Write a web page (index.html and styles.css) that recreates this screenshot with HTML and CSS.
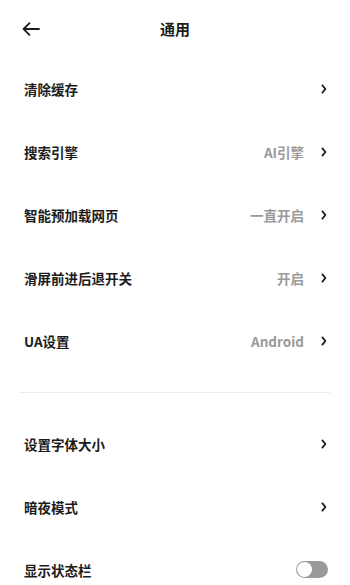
FILE: index.html
```html
<!DOCTYPE html>
<html lang="zh">
<head>
<meta charset="utf-8">
<link rel="stylesheet" href="styles.css">
</head>
<body>
<div class="page">
  <header class="header">
    <svg class="back" width="18" height="14" viewBox="0 0 18 14"><path d="M17 7H2M7.5 1.2L1.6 7l5.9 5.8" fill="none" stroke="#1c1c1c" stroke-width="1.8" stroke-linecap="round" stroke-linejoin="round"/></svg>
    <h1 class="title">通用</h1>
  </header>
  <div class="group">
    <div class="row"><span class="label">清除缓存</span><span class="right"><svg class="chev" width="6" height="10" viewBox="0 0 6 10"><path d="M1.4 1.4L4.4 5 1.4 8.6" fill="none" stroke="#1c1c1c" stroke-width="1.8" stroke-linecap="round" stroke-linejoin="round"/></svg></span></div>
    <div class="row"><span class="label">搜索引擎</span><span class="right"><span class="value">AI引擎</span><svg class="chev" width="6" height="10" viewBox="0 0 6 10"><path d="M1.4 1.4L4.4 5 1.4 8.6" fill="none" stroke="#1c1c1c" stroke-width="1.8" stroke-linecap="round" stroke-linejoin="round"/></svg></span></div>
    <div class="row"><span class="label">智能预加载网页</span><span class="right"><span class="value">一直开启</span><svg class="chev" width="6" height="10" viewBox="0 0 6 10"><path d="M1.4 1.4L4.4 5 1.4 8.6" fill="none" stroke="#1c1c1c" stroke-width="1.8" stroke-linecap="round" stroke-linejoin="round"/></svg></span></div>
    <div class="row"><span class="label">滑屏前进后退开关</span><span class="right"><span class="value">开启</span><svg class="chev" width="6" height="10" viewBox="0 0 6 10"><path d="M1.4 1.4L4.4 5 1.4 8.6" fill="none" stroke="#1c1c1c" stroke-width="1.8" stroke-linecap="round" stroke-linejoin="round"/></svg></span></div>
    <div class="row"><span class="label">UA设置</span><span class="right"><span class="value">Android</span><svg class="chev" width="6" height="10" viewBox="0 0 6 10"><path d="M1.4 1.4L4.4 5 1.4 8.6" fill="none" stroke="#1c1c1c" stroke-width="1.8" stroke-linecap="round" stroke-linejoin="round"/></svg></span></div>
  </div>
  <div class="divider"></div>
  <div class="group">
    <div class="row"><span class="label">设置字体大小</span><span class="right"><svg class="chev" width="6" height="10" viewBox="0 0 6 10"><path d="M1.4 1.4L4.4 5 1.4 8.6" fill="none" stroke="#1c1c1c" stroke-width="1.8" stroke-linecap="round" stroke-linejoin="round"/></svg></span></div>
    <div class="row"><span class="label">暗夜模式</span><span class="right"><svg class="chev" width="6" height="10" viewBox="0 0 6 10"><path d="M1.4 1.4L4.4 5 1.4 8.6" fill="none" stroke="#1c1c1c" stroke-width="1.8" stroke-linecap="round" stroke-linejoin="round"/></svg></span></div>
    <div class="row"><span class="label">显示状态栏</span><span class="right"><span class="toggle"><span class="knob"></span></span></span></div>
  </div>
</div>
</body>
</html>
```
FILE: styles.css
```css
* { box-sizing: border-box; }
html, body { margin: 0; padding: 0; background: #fff; }
body {
  font-family: "Noto Sans CJK SC", "Noto Sans", sans-serif;
  color: #1c1c1c;
  overflow: hidden;
}
.page { width: 350px; height: 585px; }
.header {
  height: 57px;
  display: flex;
  align-items: center;
  justify-content: center;
  position: relative;
}
.back { position: absolute; left: 22px; top: 22px; }
.title {
  margin: 0;
  font-size: 15px;
  font-weight: 700;
  line-height: 1;
}
.group { display: flex; flex-direction: column; }
.row {
  height: 63px;
  display: flex;
  align-items: center;
  justify-content: space-between;
  padding: 0 23px 0 24px;
}
.label {
  font-size: 13.5px;
  font-weight: 700;
  color: #1c1c1c;
}
.right { display: flex; align-items: center; gap: 17px; }
.value {
  font-size: 13.5px;
  font-weight: 700;
  color: #9a9a9a;
}
.chev { display: block; }
.divider {
  height: 1px;
  background: #ececec;
  margin: 20px 20px 19px 20px;
}
.toggle {
  width: 32px;
  height: 17px;
  border-radius: 9px;
  background: #9a9a9a;
  display: flex;
  align-items: center;
  padding: 1px;
  margin-right: -1px;
}
.knob {
  width: 15px;
  height: 15px;
  border-radius: 50%;
  background: #fff;
}
```
